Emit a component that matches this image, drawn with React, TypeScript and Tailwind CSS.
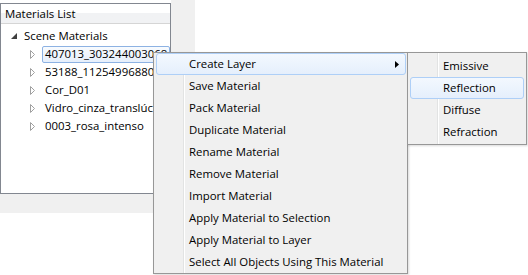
import { ReactNode } from "react";

const materiais = [
  "407013_303244003068",
  "53188_11254996880461",
  "Cor_D01",
  "Vidro_cinza_translúcido",
  "0003_rosa_intenso",
];

const itensMenu = [
  "Create Layer",
  "Save Material",
  "Pack Material",
  "Duplicate Material",
  "Rename Material",
  "Remove Material",
  "Import Material",
  "Apply Material to Selection",
  "Apply Material to Layer",
  "Select All Objects Using This Material",
];

const itensSubmenu = ["Emissive", "Reflection", "Diffuse", "Refraction"];

function Seta() {
  return (
    <svg width="6" height="9" viewBox="0 0 6 9" className="shrink-0">
      <polygon points="0.5,0.5 4.5,4.5 0.5,8.5" fill="white" stroke="#a0a0a0" />
    </svg>
  );
}

function ItemMenu({
  ativo,
  children,
  seta,
}: {
  ativo?: boolean;
  children: ReactNode;
  seta?: boolean;
}) {
  return (
    <div
      className={`relative flex items-center h-[22px] rounded-[3px] border ${
        ativo
          ? "border-[#aecff7] bg-gradient-to-b from-[#f3f8fe] to-[#e5effc]"
          : "border-transparent"
      }`}
    >
      <span className="pl-[32px] text-black whitespace-nowrap">{children}</span>
      {seta && (
        <svg
          width="4"
          height="7"
          viewBox="0 0 4 7"
          className="absolute right-[6px] top-[7px]"
        >
          <polygon points="0,0 4,3.5 0,7" fill="#000" />
        </svg>
      )}
    </div>
  );
}

export default function App() {
  return (
    <div className="relative w-[528px] h-[275px] bg-white overflow-hidden font-['Open_Sans',sans-serif] text-[11.4px] leading-none text-black">
      <div className="w-[195px] h-[213px] bg-[#f0f0f0]">
        <div className="w-[171px] h-[194px] bg-white pt-[3px]">
          <div className="h-full border border-[#828790] flex flex-col">
            <div className="h-[20px] border-b border-[#d5d5d5] bg-gradient-to-b from-white from-50% to-[#f1f2f4] to-50% flex items-center pl-[4px]">
              Materials List
            </div>

            <div className="pt-[3px]">
              <div className="flex items-center h-[18px]">
                <svg width="6" height="6" viewBox="0 0 6 6" className="ml-[10px] mr-[7px]">
                  <polygon points="6,0 6,6 0,6" fill="#404040" />
                </svg>
                Scene Materials
              </div>

              {materiais.map((nome, i) => (
                <div key={nome} className="flex items-center h-[18px] pl-[29px]">
                  <Seta />
                  <div
                    className={`ml-[6px] h-[17px] flex items-center px-[2px] whitespace-nowrap rounded-[2px] border ${
                      i === 0
                        ? "w-[128px] border-[#8db2e3] bg-gradient-to-b from-[#f8fbfe] to-[#e6effb]"
                        : "border-transparent"
                    }`}
                  >
                    {nome}
                  </div>
                </div>
              ))}
            </div>
          </div>
        </div>
      </div>

      <div className="absolute left-[153px] top-[52px] w-[255px] h-[222px] border border-[#979797] bg-[#f0f0f0] pl-[2px] pr-[1px] shadow-[1px_1px_2px_rgba(0,0,0,0.15)]">
        <div className="absolute left-[29px] top-0 bottom-0 w-[2px] border-l border-[#e2e3e3] border-r-white border-r" />
        {itensMenu.map((item, i) => (
          <ItemMenu key={item} ativo={i === 0} seta={i === 0}>
            {item}
          </ItemMenu>
        ))}
      </div>

      <div className="absolute left-[407px] top-[52px] w-[120px] h-[93px] border border-[#979797] bg-[#f0f0f0] pt-[2px] pl-[2px] pr-[2px] shadow-[1px_1px_2px_rgba(0,0,0,0.15)]">
        <div className="absolute left-[29px] top-0 bottom-0 w-[2px] border-l border-[#e2e3e3] border-r-white border-r" />
        {itensSubmenu.map((item, i) => (
          <ItemMenu key={item} ativo={i === 1}>
            {item}
          </ItemMenu>
        ))}
      </div>
    </div>
  );
}
